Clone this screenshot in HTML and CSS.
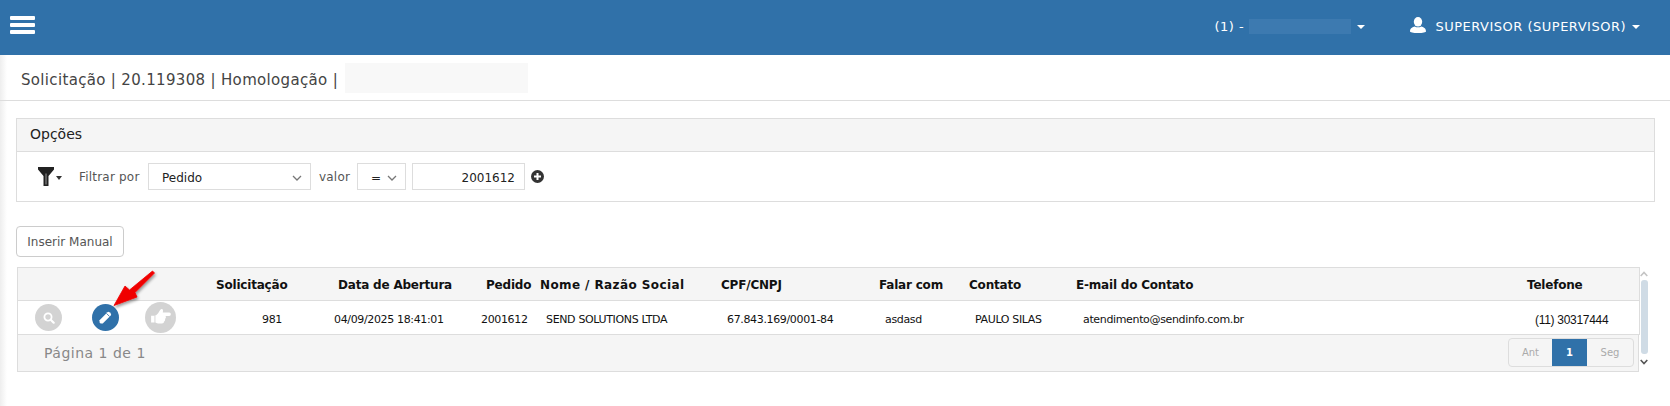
FILE: index.html
```html
<!DOCTYPE html>
<html lang="pt-BR">
<head>
<meta charset="utf-8">
<title>Solicitação</title>
<link rel="stylesheet" href="styles.css">
</head>
<body>
<header class="topbar">
  <div class="burger"><span></span><span></span><span></span></div>
  <div class="nav-right">
    <span class="nav-item nav-company">(1) -<span class="blur-nav"></span><i class="caret"></i></span>
    <span class="nav-item nav-user">
      <svg class="user-icon" viewBox="0 0 16 16" width="16" height="16"><ellipse cx="8" cy="4.800" rx="4.200" ry="4.800" fill="#fff"/><path d="M0 14.200c0-3 2.600-4.200 4.800-4.800 1.800 1.200 4.600 1.200 6.400 0 2.200.6 4.800 1.800 4.800 4.800 0 1.200-3 1.800-8 1.800s-8-.6-8-1.800z" fill="#fff"/></svg>
      SUPERVISOR (SUPERVISOR)<i class="caret"></i>
    </span>
  </div>
</header>

<section class="crumb">
  <span class="crumb-text">Solicitação | 20.119308 | Homologação | </span><span class="blur-crumb"></span>
</section>

<main class="content">
  <section class="panel">
    <div class="panel-head">Opções</div>
    <div class="panel-body">
      <span class="funnel">
        <svg viewBox="0 0 16 19" width="16" height="19"><path d="M0 0h16v2.500L10.500 9v10h-5V9L0 2.500z" fill="#222"/><path d="M8 6.500v11" stroke="#999" stroke-width="1"/></svg>
        <i class="caret caret-dark"></i>
      </span>
      <span class="lbl lbl-filter">Filtrar por</span>
      <span class="field sel sel-main">Pedido<svg class="chev" viewBox="0 0 10 6" width="10" height="6"><path d="M1 1l4 4 4-4" fill="none" stroke="#777" stroke-width="1.300"/></svg></span>
      <span class="lbl lbl-value">valor</span>
      <span class="field sel sel-op">=<svg class="chev" viewBox="0 0 10 6" width="10" height="6"><path d="M1 1l4 4 4-4" fill="none" stroke="#777" stroke-width="1.300"/></svg></span>
      <span class="field input-val">2001612</span>
      <svg class="plus" viewBox="0 0 13 13" width="13" height="13"><circle cx="6.500" cy="6.500" r="6.500" fill="#333"/><path d="M6.500 3v7M3 6.500h7" stroke="#fff" stroke-width="2"/></svg>
    </div>
  </section>

  <button class="btn">Inserir Manual</button>

  <div class="grid-wrap">
    <div class="grid-box">
      <div class="row row-head">
        <div class="c c-act"></div>
        <div class="c">Solicitação</div>
        <div class="c h-dat">Data de Abertura</div>
        <div class="c h-ped">Pedido</div>
        <div class="c h-nom">Nome / Razão Social</div>
        <div class="c">CPF/CNPJ</div>
        <div class="c">Falar com</div>
        <div class="c">Contato</div>
        <div class="c">E-mail do Contato</div>
        <div class="c">Telefone</div>
      </div>
      <div class="row row-data">
        <div class="c c-act acts">
          <span class="ic ic-search"><svg viewBox="0 0 12 12" width="12" height="12"><circle cx="5" cy="5" r="3.600" fill="none" stroke="#fff" stroke-width="1.800"/><path d="M7.700 7.700l3 3" stroke="#fff" stroke-width="2.200" stroke-linecap="round"/></svg></span>
          <span class="ic ic-edit"><svg viewBox="0 0 12 12" width="13" height="13"><path d="M.5 8.500L7.800 1.200a1.300 1.300 0 0 1 1.800 0l1.200 1.200a1.300 1.300 0 0 1 0 1.800L3.500 11.500H1.500L.5 10.500z" fill="#fff"/><path d="M6.900 2.200l2.900 2.900" stroke="#3071a9" stroke-width=".8"/></svg></span>
          <span class="ic ic-hand"><svg viewBox="0 0 20 17" width="22" height="19"><path d="M1 7h3.500c1.500-.6 2.700-2.200 3.600-3.600C8.800 2.300 9.600.8 10.700.8c1.300 0 1.300 1.700.9 3.200h5.900c1.900 0 1.900 3.200 0 3.200h-3.300c.5 1.100.3 2.100-.5 2.600.3 1-.2 2.100-1 2.400 0 1.300-.8 1.800-1.800 1.800H8.500c-1.500 0-2.800-.8-4-1H1z" fill="#fff"/><path d="M4.500 7v6.800" stroke="#d3d3d3" stroke-width=".8" fill="none"/></svg></span>
        </div>
        <div class="c v-sol">981</div>
        <div class="c">04/09/2025 18:41:01</div>
        <div class="c">2001612</div>
        <div class="c v-nom">SEND SOLUTIONS LTDA</div>
        <div class="c v-cpf">67.843.169/0001-84</div>
        <div class="c v-fal">asdasd</div>
        <div class="c v-con">PAULO SILAS</div>
        <div class="c v-ema">atendimento@sendinfo.com.br</div>
        <div class="c v-tel">(11) 30317444</div>
      </div>
      <div class="grid-foot">
        <span class="page-info">Página 1 de 1</span>
        <span class="pager"><span class="pg pg-ant">Ant</span><span class="pg pg-on">1</span><span class="pg pg-seg">Seg</span></span>
      </div>
      <svg class="red-arrow" viewBox="0 0 60 50" width="60" height="50">
        <defs><filter id="sh" x="-30%" y="-30%" width="160%" height="160%"><feDropShadow dx="1" dy="2" stdDeviation="1.500" flood-color="#000" flood-opacity=".4"/></filter></defs>
        <path d="M45.500 5L47.500 7 28 26.500 30 31 7 39.500 18 20 22.500 24z" fill="#f00602" stroke="#f00602" stroke-width=".8" stroke-linejoin="round" filter="url(#sh)"/>
      </svg>
    </div>
    <div class="scroll">
      <svg viewBox="0 0 8 6" width="8" height="6"><path d="M.7 5l3.300-3.500L7.300 5" fill="none" stroke="#c4c4c4" stroke-width="1.600"/></svg>
      <div class="thumb"></div>
      <svg viewBox="0 0 8 6" width="8" height="6"><path d="M.7 1l3.300 3.500L7.300 1" fill="none" stroke="#555" stroke-width="1.600"/></svg>
    </div>
  </div>
</main>
</body>
</html>
```
FILE: styles.css
```css
* { box-sizing: border-box; }
html, body { margin: 0; padding: 0; height: 406px; overflow: hidden; }
body {
  font-family: "DejaVu Sans", sans-serif;
  color: #333;
  background: linear-gradient(to right, #eeeeee, #ffffff) no-repeat 0 0 / 7px 100%;
}
.topbar {
  height: 55px;
  background: #3071a9;
  display: flex;
  align-items: center;
  justify-content: space-between;
  padding: 0 30px 0 10px;
  color: #fff;
}
.burger { display: flex; flex-direction: column; gap: 3px; width: 25px; margin-top: -6px; }
.burger span { display: block; height: 4px; background: #fff; border-radius: 1px; }
.nav-right { display: flex; align-items: center; margin-top: -2px; font-size: 13px; letter-spacing: .5px; }
.nav-item { display: inline-flex; align-items: center; }
.nav-company { width: 196px; }
.blur-nav { width: 102px; height: 15px; margin: 0 0 0 5px; background: #3d7ab0; }
.user-icon { margin-right: 9px; margin-top: -3px; }
.caret { display: inline-block; width: 0; height: 0; margin-left: 6px; border-left: 4px solid transparent; border-right: 4px solid transparent; border-top: 4px solid #fff; }
.caret-dark { border-top-color: #333; border-left-width: 3.500px; border-right-width: 3.500px; margin-left: 2px; margin-top: 3px; }
.crumb {
  height: 46px;
  border-bottom: 1px solid #ddd;
  display: flex;
  align-items: center;
  padding-left: 21px;
  font-size: 15px;
  letter-spacing: .33px;
  color: #444;
  white-space: pre;
}
.crumb-text { padding-top: 5px; }
.blur-crumb { width: 183px; height: 30px; background: #f8f8f8; margin-left: 2px; }
.content { padding: 17px 15px 0 16px; }
.panel { border: 1px solid #ddd; height: 84px; }
.panel-head { height: 33px; background: #f5f5f5; border-bottom: 1px solid #ddd; padding: 0 13px; line-height: 31px; font-size: 14px; color: #222; }
.panel-body { height: 49px; display: flex; align-items: center; padding: 0 0 0 21px; font-size: 12px; }
.funnel { display: inline-flex; align-items: center; width: 40px; }
.lbl { color: #555; letter-spacing: .2px; padding-top: 1px; }
.lbl-filter { width: 69px; margin-left: 1px; }
.lbl-value { width: 38px; margin-left: 8px; }
.field { height: 27px; padding-top: 2px; border: 1px solid #ddd; background: #fff; color: #222; display: inline-flex; align-items: center; position: relative; }
.sel { padding-left: 13px; justify-content: space-between; padding-right: 8px; }
.sel-main { width: 163px; }
.sel-op { width: 49px; }
.input-val { width: 113px; margin-left: 6px; justify-content: flex-end; padding-right: 9px; }
.plus { margin-left: 6px; }
.btn {
  display: block;
  margin-top: 24px;
  width: 108px;
  height: 31px;
  padding: 0;
  border: 1px solid #ccc;
  border-radius: 4px;
  background: #fff;
  color: #555;
  font: 12px "DejaVu Sans", sans-serif;
}
.grid-wrap { display: flex; margin-top: 10px; margin-left: 1px; align-items: stretch; }
.grid-box { width: 1623px; position: relative; }
.row { display: grid; grid-template-columns: 198px 118px 147px 59px 181px 158px 90px 107px 451px 112px; font-size: 11px; align-items: center; border: 1px solid #ddd; }
.row-head { height: 34px; padding-top: 1px; background: #f5f5f5; font-weight: bold; font-size: 12px; color: #111; border-bottom: 1px solid #ddd; letter-spacing: -.2px; }
.row-data { height: 34px; padding-top: 4px; border-top: 0; color: #111; letter-spacing: -.35px; }
.c { white-space: nowrap; }
.h-dat { padding-left: 4px; }
.h-ped { padding-left: 5px; }
.h-nom { letter-spacing: .4px; }
.v-sol { padding-left: 46px; }
.v-nom { padding-left: 6px; }
.v-cpf { padding-left: 6px; }
.v-fal { padding-left: 6px; }
.v-con { padding-left: 6px; }
.v-ema { padding-left: 7px; }
.v-tel { padding-left: 8px; font-family: "Liberation Sans", sans-serif; font-size: 12px; letter-spacing: -.3px; }
.acts { display: flex; align-items: center; padding-left: 17px; margin-top: -4px; }
.ic { display: inline-flex; align-items: center; justify-content: center; border-radius: 50%; background: #d3d3d3; }
.ic-search { width: 27px; height: 27px; }
.ic-edit { width: 27px; height: 27px; background: #3071a9; margin-left: 30px; }
.ic-hand { width: 31px; height: 31px; margin-left: 26px; }
.grid-foot {
  height: 37px;
  width: 1622px;
  background: #f5f5f5;
  border: 1px solid #ddd;
  border-top: 0;
  display: flex;
  align-items: center;
  justify-content: space-between;
  padding-left: 26px;
  padding-right: 4px;
  font-size: 14px;
  letter-spacing: .5px;
  color: #888;
}
.pager { display: flex; height: 29px; border: 1px solid #ddd; border-radius: 4px; font-size: 10px; letter-spacing: 0; overflow: hidden; margin-top: -1px; }
.pg { display: flex; align-items: center; justify-content: center; color: #aaa; }
.pg-ant { width: 43px; }
.pg-on { width: 35px; background: #3071a9; color: #fff; font-weight: bold; }
.pg-seg { width: 46px; }
.red-arrow { position: absolute; left: 90px; top: -1px; pointer-events: none; }
.scroll { width: 28px; height: 106px; display: flex; flex-direction: column; align-items: center; justify-content: space-between; padding: 4px 13px 8px 0; }
.thumb { width: 7px; height: 74px; background: #cfdbe5; border-radius: 3px; margin: 1px 0 3px; flex: none; }
```
